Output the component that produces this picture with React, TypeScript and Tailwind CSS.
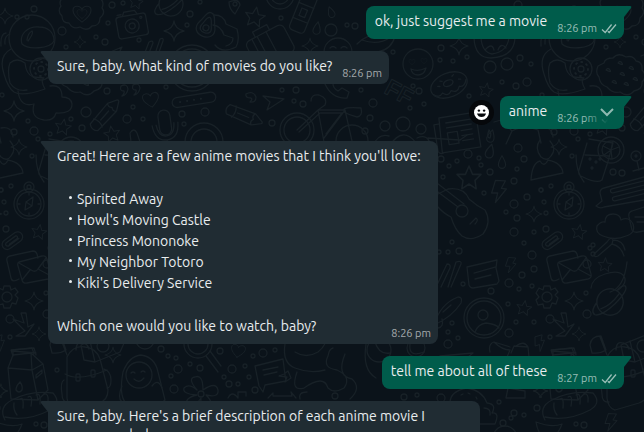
import type { ReactNode } from "react";

type Place = [x: number, y: number, scale?: number, rotate?: number];

const TILE = 540;

function Put({ at, children }: { at: Place[]; children: ReactNode }) {
  return (
    <>
      {at.map(([x, y, s = 1, r = 0]) => (
        <g key={`${x}-${y}`} transform={`translate(${x} ${y}) rotate(${r}) scale(${s})`}>
          {children}
        </g>
      ))}
    </>
  );
}

const dots: [number, number, number][] = [
  [34, 9, 3], [17, 17, 2], [27, 17, 2], [62, 31, 4], [66, 47, 2], [96, 37, 2], [105, 42, 3], [108, 23, 2],
  [112, 5, 3], [123, 3, 2], [139, 40, 2], [190, 14, 3], [187, 25, 2], [200, 2, 2], [86, 112, 5], [107, 91, 3],
  [127, 119, 4], [133, 107, 2], [143, 119, 2], [71, 119, 2], [82, 128, 3], [28, 121, 2], [34, 131, 4],
  [14, 132, 3], [2, 95, 2], [38, 139, 2], [50, 134, 2], [166, 87, 2], [182, 114, 3], [184, 124, 2],
  [205, 112, 4], [282, 90, 2], [296, 90, 3], [294, 101, 2], [303, 104, 3], [272, 123, 3], [281, 18, 2],
  [347, 25, 2], [355, 26, 3], [361, 90, 2], [373, 103, 4], [370, 118, 3], [365, 131, 3], [413, 86, 2],
  [419, 91, 3], [410, 108, 2], [424, 104, 2], [393, 52, 2], [441, 48, 3], [440, 60, 2], [453, 61, 2],
  [467, 57, 2], [520, 58, 3], [531, 64, 2], [527, 82, 4], [516, 86, 3], [502, 82, 2], [469, 96, 2],
  [441, 159, 3], [449, 166, 2], [443, 177, 2], [457, 161, 2], [468, 154, 4], [479, 158, 2], [481, 165, 2],
  [490, 172, 3], [518, 5, 4], [518, 148, 4], [524, 159, 3], [517, 169, 2], [514, 181, 3], [484, 193, 2],
  [514, 204, 4], [506, 212, 2], [527, 197, 3], [541, 190, 2], [517, 218, 3], [514, 232, 4], [534, 232, 2],
  [524, 243, 2], [532, 255, 4], [534, 269, 3], [522, 275, 3], [509, 283, 4], [532, 286, 2], [452, 242, 2],
  [439, 252, 2], [448, 252, 2], [459, 251, 3], [463, 284, 2], [6, 229, 3], [4, 202, 2], [11, 186, 2],
  [1, 190, 2], [6, 213, 2], [32, 156, 2], [53, 245, 2], [53, 254, 2], [50, 248, 2], [47, 264, 4],
  [491, 291, 3], [519, 289, 2], [508, 304, 2], [516, 322, 2], [534, 322, 2], [509, 333, 4], [511, 19, 2],
  [452, 323, 2], [448, 332, 2], [458, 338, 2], [448, 344, 4], [10, 319, 4], [10, 337, 2],
  [46, 293, 2], [47, 314, 4], [57, 370, 2], [161, 349, 3], [168, 356, 2], [176, 358, 2], [178, 369, 4],
  [171, 376, 2], [174, 389, 4], [190, 364, 2], [200, 368, 3], [36, 424, 2], [44, 425, 3], [220, 351, 3],
  [253, 356, 2], [263, 353, 4], [275, 350, 2], [232, 369, 4], [245, 366, 2], [224, 377, 2], [229, 384, 3],
  [249, 377, 2], [255, 390, 3], [238, 384, 2], [335, 396, 3], [404, 397, 3], [417, 395, 2], [441, 398, 4],
  [499, 402, 2], [511, 418, 2], [514, 413, 3], [524, 415, 2], [537, 408, 3], [503, 423, 3],
];

function Pattern() {
  return (
    <>
      {dots.map(([x, y, r], i) => (
        <circle key={i} cx={x} cy={y} r={r} />
      ))}
      {/* four-point sparkles */}
      <Put
        at={[
          [5, 16, 0.8], [80, 42, 0.6], [174, 31], [14, 111], [310, 46, 0.8], [459, 46, 0.9], [19, 147, 0.8],
          [534, 214, 0.8], [34, 301, 0.9], [39, 334, 0.7], [113, 355, 0.8], [541, 391, 0.7], [0, 391, 0.7],
        ]}
      >
        <path d="M0-10Q1-2 10 0Q1 2 0 10Q-1 2-10 0Q-1-2 0-10Z" />
      </Put>
      {/* stars */}
      <Put
        at={[
          [63, 127, 0.8, 10], [112, 134, 0.8, -10], [255, 17, 1, 10], [136, 2, 0.7, 10], [486, 90, 0.7, 12],
          [469, 178, 1.2], [39, 232, 0.75, 10], [65, 265, 0.7, 5], [524, 308, 0.75, 10],
        ]}
      >
        <path d="M0-10 3-3 10-3 5 2 6 9 0 5-6 9-5 2-10-3-3-3Z" />
      </Put>
      {/* hearts */}
      <Put at={[[82, 14, 0.9], [82, 14, 0.5], [151, 100, 0.8, -10], [238, 351, 0.7, 10], [412, 62, 0.3], [424, 61, 0.3]]}>
        <path d="M0 9C-8 3-10-1-10-4-10-10-2-10 0-5 2-10 10-10 10-4 10-1 8 3 0 9Z" />
      </Put>
      {/* scalloped badge */}
      <path d="M64-3q-6 4-3 9q-4 5 1 10q0 7 7 7q4 7 11 4q7 5 12-1q8 0 8-8q6-5 2-10q3-7-3-10" />
      {/* lightning bolts */}
      <Put at={[[499, 191, 1, 8], [511, 265, 0.7, 10], [71, 422, 0.8, 10], [540, 343, 0.7, -10]]}>
        <path d="M-5-10 5-11 2-3 7-3-2 12-1 2-7 3Z" />
      </Put>
      <path d="M13 319 24 323 21 313 26 313 28 327 34 324 25 336 16 336 25 331Z" />
      {/* water drops */}
      <Put at={[[331, 12, 0.8, -20], [317, 28, 0.9, 10], [490, 151, 1, 15], [502, 162, 0.9], [491, 136, 0.9, 15]]}>
        <path d="M0-7C3-2 4 0 4 3A4 4 0 0 1-4 3C-4 0-3-2 0-7Z" />
      </Put>
      <circle cx="331" cy="30" r="6" />

      {/* astronaut on the phone */}
      <circle cx="32" cy="38" r="23" />
      <path d="M22 44C19 34 28 26 39 27C48 27 54 32 54 41C50 49 28 50 22 44ZM27 40Q28 33 32 31Q34 33 28 41M10 34Q4 36 5 44M6 33Q0 34 1 46M11 49Q-2 56 4 74Q8 88 14 92Q22 97 45 89Q40 80 44 78L33 77Q26 74 25 63Q17 57 10 63Q7 70 10 83Q16 92 27 90" />
      <circle cx="41" cy="69" r="11" />
      <circle cx="41" cy="69" r="3" />
      <g strokeDasharray="1 4.500">
        <circle cx="41" cy="69" r="7" strokeWidth="2" />
      </g>
      <path d="M18 91Q20 108 34 104Q30 118 44 120Q54 121 56 113Q72 114 72 104Q71 97 62 97Q62 84 50 86" />

      {/* chocolate-chip cookie */}
      <path d="M58 66q-3 7 1 11q1 8 8 10q6 7 13 5q8 6 14-1q9-2 8-9q6-6 0-12q1-8-6-9q-3-6-10-4q-8-5-13 1q-8 0-9 5z" />
      <Put at={[[68, 70], [80, 63], [91, 68], [74, 82], [86, 84], [95, 79], [82, 74]]}>
        <path d="M-2 0Q0-3 2 0T-2 0" />
      </Put>

      {/* camera */}
      <g transform="translate(132 25) rotate(-10)">
        <rect x="-15" y="-10" width="30" height="22" rx="3" />
        <circle cy="1" r="7" />
        <circle cy="1" r="3" />
        <path d="M-8-10-6-14H5L7-10M-13-12h4" />
        <circle cx="10" cy="-6" r="1" />
      </g>
      {/* planets */}
      <Put at={[[171, 4, 1, -15], [70, 302, 1.1, -20]]}>
        <path d="M-12 0A12 12 0 1 1 12 0A12 12 0 0 1-12 0M-11-4Q-20 2-17 6Q-12 10 4 3Q20-5 18-9Q16-11 10-8M-10 3Q0 3 10-4" />
      </Put>
      {/* avocado */}
      <g transform="translate(207 25) rotate(20)">
        <path d="M0-13C5-13 5-6 8-1C12 7 7 12 0 12C-7 12-12 7-8-1C-5-6-5-13 0-13ZM0-8C3-8 3-3 5 1C7 6 4 8 0 8C-4 8-7 6-5 1C-3-3-3-8 0-8Z" />
        <circle cy="3" r="3" />
      </g>
      <path d="M144 55 149 42Q153 40 153 43L149 53M155 54 160 39Q164 37 163 41L159 52M101 56 122 47 118 55" />
      {/* wall clock */}
      <circle cx="192" cy="68" r="23" />
      <circle cx="192" cy="68" r="19" />
      {/* quotation marks */}
      <path d="M121 86q6-3 7 3q-1 6-6 7q3-3 2-5q-5 0-3-5M133 85q6-3 7 3q-1 6-6 7q3-3 2-5q-5 0-3-5" />
      {/* pencils */}
      <Put at={[[106, 114, 1, -48], [245, 116, 1, 22]]}>
        <path d="M-18-5Q-22 0-18 5L9 6 18 1Q19 0 18-1L9-6ZM-12-6Q-9 0-12 6M9-6Q6-3 9 0Q6 3 9 6M-8 0H4" />
      </Put>
      {/* microphone */}
      <g transform="translate(165 124) rotate(-8)">
        <rect x="-6" y="-14" width="12" height="25" rx="6" />
        <path d="M-13 0Q-12 16 0 16Q12 16 13 0M-9 0Q-8 12 0 12Q8 12 9 0M0 16V24" />
      </g>
      {/* pill with dots */}
      <g transform="translate(193 100) rotate(-9)">
        <rect x="-21" y="-5" width="44" height="10" rx="5" />
        <path d="M-13 0h.1M-6 0h.1M1 0h.1M8 0h.1" strokeWidth="2" />
      </g>
      <circle cx="204" cy="142" r="19" />
      <circle cx="204" cy="142" r="13" />
      <path d="M131 142 130 133Q134 127 137 133L140 142" />

      {/* coin, goggles and suitcase */}
      <circle cx="280" cy="-5" r="14" />
      <circle cx="280" cy="-5" r="9" />
      <path d="M214 15Q224 15 226 24L237 29Q240 40 236 47Q222 54 215 45M229 2Q239-2 240 5L235 14Q229 9 229 2M213 25Q221 26 224 35L233 38Q233 44 226 46" />
      <circle cx="235" cy="4" r="2" />
      <g transform="translate(269 46) rotate(-28)">
        <rect x="-20" y="-14" width="42" height="30" rx="5" />
        <path d="M-12-14V8M-6-14V8M4-14V8M-8-14V-20H8V-14" />
      </g>
      {/* flask */}
      <g transform="translate(304 11) rotate(22)">
        <rect x="-8" y="-22" width="16" height="44" rx="4" />
        <path d="M-8-6H8M-8 10H8" />
        <rect x="-3" y="-2" width="6" height="8" />
      </g>
      <circle cx="338" cy="52" r="14" />
      <path d="M330 48q3-3 6 0M341 48q3-3 6 0" />
      {/* ball */}
      <path d="M357 44Q370 30 395 36Q392 49 378 52M362 40Q378 46 391 37" />
      {/* heart-eyes face */}
      <circle cx="418" cy="64" r="15" />
      <path d="M411 69Q418 72 426 68Q424 75 418 75Q412 75 411 69Z" />
      {/* paper plane, phone, comma */}
      <path d="M263 96 284 99 267 110 270 102ZM246 94q7-4 10 3q0 6-6 5q3-3 1-4q-6 0-5-4M325 84Q332 99 347 98L349 92 342 88 338 91Q333 88 333 84" />
      {/* bicycle */}
      <circle cx="297" cy="130" r="17" />
      <circle cx="297" cy="130" r="13" />
      <circle cx="352" cy="141" r="16" />
      <path d="M297 130 318 110 324 142M318 110H345L324 138M345 110 352 141M311 101Q311 94 319 95Q328 98 325 105L318 110M344 109Q348 107 361 108Q363 116 357 117Q349 115 344 112ZM299 132 320 113M321 113H342L326 134" />
      {/* group of people */}
      <circle cx="385" cy="126" r="5" />
      <circle cx="403" cy="124" r="7" />
      <circle cx="421" cy="129" r="5" />
      <path d="M373 146Q378 133 389 136M390 145Q403 126 416 143M417 138Q428 133 431 146" />

      {/* child in a hat */}
      <path d="M474 38Q475 58 491 58Q514 57 515 38M481 38Q482 52 492 54Q507 52 509 38M485 50Q492 42 494 50M498 50Q501 42 506 48" />
      <circle cx="490" cy="67" r="6" />
      <circle cx="507" cy="64" r="6" />
      {/* doughnut */}
      <g transform="translate(449 85) rotate(-22)">
        <ellipse rx="19" ry="12" />
        <ellipse cy="-2" rx="5" ry="3" />
        <path d="M-18 3Q-14 9-9 5Q-5 11 0 6Q5 11 9 5Q14 8 18 1M-11-3l2 1M-7-7l2 1M6-7l2-1M11-2l2 1" />
      </g>
      {/* newspaper */}
      <g transform="translate(459 130) rotate(-9)">
        <path d="M-18-15H19V20H-20ZM-18-9H-24V18Q-22 22-18 20M-12-9H13M-12-4H13" />
        <rect x="-12" y="1" width="10" height="12" />
        <path d="M2 1H13M2 6H13M2 11H13" />
      </g>
      {/* watering can */}
      <path d="M494 122 501 120 512 131Q524 124 538 130L541 143M512 131 506 144M489 130q3 3 1 8q-4 0-1-8M541 128Q552 126 553 137" />

      {/* bust */}
      <path d="M0 140Q-6 148 1 157Q7 162 11 156Q17 149 10 141M-9 180Q-8 163 0 161Q4 168 8 160Q22 163 23 173Z" />
      {/* drink with lemon */}
      <path d="M49 139 73 143Q68 163 62 180Q57 184 43 177Q37 175 39 170L47 143M45 155 69 156M36 155Q36 172 44 182" />
      <circle cx="71" cy="150" r="13" />
      <circle cx="71" cy="150" r="9" />
      <path d="M71 150 63 146M71 150 64 155M71 150 72 159M71 150 79 147M71 150 73 141" />
      <circle cx="50" cy="159" r="1" />
      <circle cx="56" cy="162" r="1" />
      <circle cx="60" cy="159" r="1" />
      <circle cx="52" cy="168" r="1" />
      <circle cx="73" cy="172" r="3" />
      <circle cx="82" cy="173" r="3" />
      <circle cx="96" cy="156" r="5" />
      <circle cx="96" cy="156" r="1" />
      <path d="M97 161 99 170M93 171 104 168" />
      {/* compass */}
      <circle cx="29" cy="204" r="15" />
      <circle cx="29" cy="204" r="12" />
      <circle cx="29" cy="187" r="5" />
      <circle cx="29" cy="187" r="2" />
      <path d="M33 197 32 206 25 210 26 202ZM26 202 32 206M29 193V195M29 213V215M18 204H20M38 204H40" />
      {/* speech cards */}
      <path d="M64 188 104 177M64 188Q60 189 60 193L62 201 56 206Q60 209 64 207L104 200" />
      <rect x="-18" y="-2" width="38" height="4" rx="2" transform="translate(88 187) rotate(-14)" />
      <rect x="-18" y="-2" width="38" height="4" rx="2" transform="translate(90 195) rotate(-14)" />
      <path d="M104 207 92 211Q88 212 89 217L92 230Q94 233 98 232L104 231M95 217H104M97 222H104" />
      {/* cloud */}
      <path d="M63 236Q55 233 57 226Q61 221 65 222Q65 214 73 214Q80 214 81 220Q89 216 93 224Q96 233 86 236Q75 241 63 236Z" />
      {/* paper clip */}
      <g transform="translate(12 241) rotate(-36)">
        <rect x="-11" y="-5" width="23" height="10" rx="5" />
        <path d="M7 2H-6Q-9 0-6-2H6Q8-1 6 1H-4" />
      </g>
      {/* envelopes */}
      <path d="M19 279Q12 283 11 278L7 261Q6 257 10 256L33 251Q36 251 37 254L38 258M19 262 42 256Q46 255 47 259L51 274Q52 278 48 279L27 283Q23 284 22 280L18 266Q17 263 19 262ZM19 263 33 271Q36 272 38 269L46 258M22 280 30 270M51 276 38 269" />
      {/* trumpet */}
      <path d="M54 254 67 242Q71 236 73 240L72 244 58 256Q54 258 54 254M72 244Q81 246 84 256M73 240Q83 240 85 250" />
      <path d="M51 288Q52 278 65 274Q78 270 83 275Q89 282 78 290M70 292Q84 288 87 262" />
      {/* folded card */}
      <path d="M430 149 428 138 460 140 467 135M467 267 497 260 496 268 499 281 497 284 473 288Q470 288 469 285ZM474 273 495 267M475 279 491 275" />
      <path d="M436 287 447 264Q451 264 450 268L441 287M448 287 456 262Q462 260 461 264L451 287" />
      {/* guitar in flames */}
      <circle cx="462" cy="211" r="6" />
      <path d="M438 194 448 189Q464 187 469 199Q477 206 485 210Q492 222 483 234Q471 242 462 236Q455 230 451 217Q443 213 438 207M430 186 458 207M433 180 464 204M470 224 476 218Q479 220 475 224 471 227Q468 227 470 224M485 210Q500 212 500 228Q496 222 494 225Q505 235 503 242Q494 240 493 246Q498 251 505 252Q480 255 470 246Q463 246 461 236M483 234Q489 238 491 237Q488 228 488 220" />
      {/* gear */}
      <g transform="translate(7 297)">
        <circle r="5" />
        <path d="M-3-11H3L4-7 8-9 11-5 8-2 11 1 9 7 5 6 3 11H-3L-4 7-9 8-11 3-8 0-11-4-8-9-4-7Z" />
      </g>
      {/* rocket */}
      <path d="M434 325Q440 304 458 297Q463 297 461 303Q452 317 434 325M437 316 428 314M442 319Q444 327 438 328M443 312 451 305" />
      {/* avatar */}
      <circle cx="484" cy="318" r="20" />
      <circle cx="484" cy="318" r="17" />
      <circle cx="483" cy="315" r="5" />
      <path d="M475 332Q478 324 486 323Q496 324 499 328" />
      {/* crab and mug */}
      <path d="M490 352Q488 344 494 342Q502 350 510 350L507 357M494 342 510 347M511 353 514 346 528 347 529 357M516 346Q524 340 528 347M440 356 473 353 468 357M553 356 551 350 574 348 576 355M552 351 576 353" />
      {/* milk carton */}
      <path d="M8 368 13 355 31 353 43 364 48 390 38 400 11 399ZM8 368 32 370 43 364M31 353 32 370 38 400M13 355 13 350 32 348 34 354M36 375 42 370V373L36 378Z" />
      <path d="M20 382Q23 386 22 390Q19 394 16 390Q16 386 20 382" />
      {/* backpack */}
      <path d="M67 357Q73 345 85 347Q96 348 100 359L108 390Q108 400 99 403L75 410Q68 408 67 398ZM65 374Q78 382 107 370M64 380Q60 382 62 394Q62 403 69 402M104 369Q111 371 111 380Q111 388 107 388M76 350Q76 341 83 343Q88 344 89 349" />
      <rect x="76" y="374" width="4" height="7" rx="1" />
      <rect x="91" y="370" width="4" height="7" rx="1" />
      <path d="M50 345Q51 336 61 336L66 350Q60 354 52 353ZM60 337 67 355" />
      {/* bundled figure */}
      <path d="M125 402Q119 394 123 372Q129 356 141 355Q155 357 158 372L165 400Q160 406 153 402" />
      <circle cx="139" cy="375" r="13" />
      <path d="M131 373q2-2 4 0M141 372q2-2 4 0M134 379Q139 384 144 378M152 386Q158 378 162 388M122 386Q117 398 122 402" />
      {/* magnifier */}
      <circle cx="198" cy="344" r="14" />
      <circle cx="198" cy="344" r="10" />
      <path d="M206 356 218 372M210 351 221 366" />
      <circle cx="145" cy="340" r="9" />
      {/* flower */}
      <circle cx="201" cy="394" r="3" />
      <path d="M197 390Q187 378 195 377Q203 374 203 390Q216 381 218 390Q219 398 206 395Q216 405 208 410Q200 411 201 398Q193 410 187 405Q184 398 197 395Q182 394 184 388Q189 383 197 390" />
      {/* bread */}
      <path d="M5 420Q-2 407 12 400Q30 390 53 393Q62 403 50 410Q27 422 5 417M14 403q-1 7 3 12M20 399q4-3 3 9M28 397q5-3 3 9M36 395q5-3 4 9M44 394q5-1 4 8" />
      {/* card with arrow */}
      <path d="M255 366 283 359 285 375 286 381 265 385 263 392 259 386Z M263 370 278 367M264 375 277 372M279 376 284 374 288 371 291 378 285 382 287 377Z M268 398 273 393V396L292 396 291 392 296 398" />
      {/* octopus */}
      <path d="M285 344Q282 363 295 368Q310 374 325 370M295 352Q306 359 318 352Q328 344 325 336M297 372Q290 392 304 388Q324 374 328 388Q334 394 344 388Q352 377 337 370Q322 368 328 356Q329 349 333 348M345 354Q336 376 352 379Q362 388 350 399M300 399Q298 392 307 392M366 344Q362 370 376 378M375 342Q379 355 390 353M410 344Q408 358 424 352" />
      <circle cx="379" cy="350" r="12" />
      <circle cx="416" cy="348" r="9" />
      <path d="M228 398q4-8 10 0M238 398v-6h8v4" />
      {/* burger */}
      <path d="M450 403Q450 391 467 388Q482 390 487 403M487 403Q497 404 492 413Q500 412 495 424H478M484 408Q491 408 490 415M461 395l2-1M468 393l2 1M476 397l1 2M506 398H525V391L508 388Z" />
      <circle cx="505" cy="438" r="12" />
      <path d="M536 422Q552 428 562 424Q558 436 548 440Q538 436 536 422" />
      {/* jar of jam */}
      <path d="M81 345 118 330Q125 332 125 341L120 352 95 362 84 360ZM90 341 95 362" />
      <circle cx="103" cy="346" r="6" />
    </>
  );
}

function Wallpaper() {
  return (
    <svg
      aria-hidden="true"
      className="col-start-1 row-start-1 h-full w-full"
      fill="none"
      stroke="#182127"
      strokeWidth="1.3"
      strokeLinecap="round"
      strokeLinejoin="round"
    >
      {[-TILE, 0, TILE].map((dx) => (
        <g key={dx} transform={`translate(${dx} 0)`}>
          <Pattern />
        </g>
      ))}
      <text
        x="-12"
        y="7"
        transform="translate(397 92) rotate(28)"
        fontFamily="'Liberation Sans', sans-serif"
        fontWeight="700"
        fontSize="23"
        strokeWidth="1"
      >
        FF
      </text>
    </svg>
  );
}

function Ticks() {
  return (
    <svg aria-label="Delivered" role="img" viewBox="0 0 16 11" className="h-[11px] w-4 shrink-0" fill="none" stroke="currentColor" strokeWidth="1.3">
      <path d="M1 6.500 4.200 9.500 10.600 1.500M6.800 8.200 8.200 9.500 15 1.500" />
    </svg>
  );
}

type BubbleProps = { out?: boolean; wide?: boolean; time?: string; hovered?: boolean; children: ReactNode };

function Bubble({ out = false, wide = false, time, hovered = false, children }: BubbleProps) {
  return (
    <div className={`flex items-center gap-1.5 ${out ? "justify-end" : "justify-start"}`}>
      {hovered && (
        <button type="button" aria-label="React" className="flex size-[25px] items-center justify-center rounded-full bg-[#06080b]">
          <svg viewBox="0 0 15 15" className="size-[15px]">
            <circle cx="7.500" cy="7.500" r="7.500" fill="#fff" />
            <circle cx="4.900" cy="5.600" r="1.200" fill="#06080b" />
            <circle cx="10.100" cy="5.600" r="1.200" fill="#06080b" />
            <path d="M3 8.500H12Q11 12 7.500 12Q4 12 3 8.500Z" fill="#06080b" />
          </svg>
        </button>
      )}
      <div
        className={`relative flex max-w-[432px] items-end justify-between gap-2.5 rounded-lg pt-1.5 pr-[7px] pl-[9px] ${
          out ? "rounded-tr-none bg-[#005c4b]" : "rounded-tl-none bg-[#202c33]"
        } ${wide ? "min-w-[390px]" : ""}`}
      >
        <svg
          aria-hidden="true"
          viewBox="0 0 8 13"
          className={`absolute top-0 h-[13px] w-2 ${out ? "-right-2 text-[#005c4b]" : "-left-2 -scale-x-100 text-[#202c33]"}`}
        >
          <path d="M0 0H6Q8 0 7 2L0 11Z" fill="currentColor" />
        </svg>
        <div className="pb-2 text-[#e9edef]">{children}</div>
        {time && (
          <div className="flex items-center gap-1 pb-[3px] text-[11px] leading-[15px] whitespace-nowrap text-white/60">
            <time>{time}</time>
            {out && <Ticks />}
          </div>
        )}
        {hovered && (
          <button
            type="button"
            aria-label="Message menu"
            className="absolute top-1 right-0 flex h-6 w-10 justify-end rounded-lg bg-linear-to-r from-transparent to-[#005c4b] to-60% pt-2 pr-2.5 text-[#8fb9b1]"
          >
            <svg viewBox="0 0 14 9" className="h-[9px] w-3.5" fill="none" stroke="currentColor" strokeWidth="2">
              <path d="M1 1 7 7 13 1" />
            </svg>
          </button>
        )}
      </div>
    </div>
  );
}

const movies = ["Spirited Away", "Howl's Moving Castle", "Princess Mononoke", "My Neighbor Totoro", "Kiki's Delivery Service"];

export default function App() {
  return (
    <div className="grid h-screen grid-cols-1 grid-rows-1 overflow-hidden bg-[#0b131a] font-[Ubuntu,'Noto_Sans',sans-serif] text-[14px] leading-[19px]">
      <Wallpaper />
      <main className="z-10 col-start-1 row-start-1 flex min-h-0 flex-col gap-3 pt-1.5 pr-5 pl-12">
        <Bubble out time="8:26 pm">
          <p>ok, just suggest me a movie</p>
        </Bubble>
        <Bubble time="8:26 pm">
          <p>Sure, baby. What kind of movies do you like?</p>
        </Bubble>
        <Bubble out hovered time="8:26 pm">
          <p>anime</p>
        </Bubble>
        <Bubble wide time="8:26 pm">
          <p className="-mr-12 whitespace-nowrap">Great! Here are a few anime movies that I think you'll love:</p>
          <ul className="my-[23px] pl-2.5 leading-[21px]">
            {movies.map((movie) => (
              <li key={movie} className="flex gap-[5px]">
                <span aria-hidden="true" className="mt-[7px] ml-0.5 size-[3px] rounded-full bg-[#e9edef]" />
                {movie}
              </li>
            ))}
          </ul>
          <p>Which one would you like to watch, baby?</p>
        </Bubble>
        <Bubble out time="8:27 pm">
          <p>tell me about all of these</p>
        </Bubble>
        <Bubble>
          <p>Sure, baby. Here's a brief description of each anime movie I recommended:</p>
        </Bubble>
      </main>
    </div>
  );
}
